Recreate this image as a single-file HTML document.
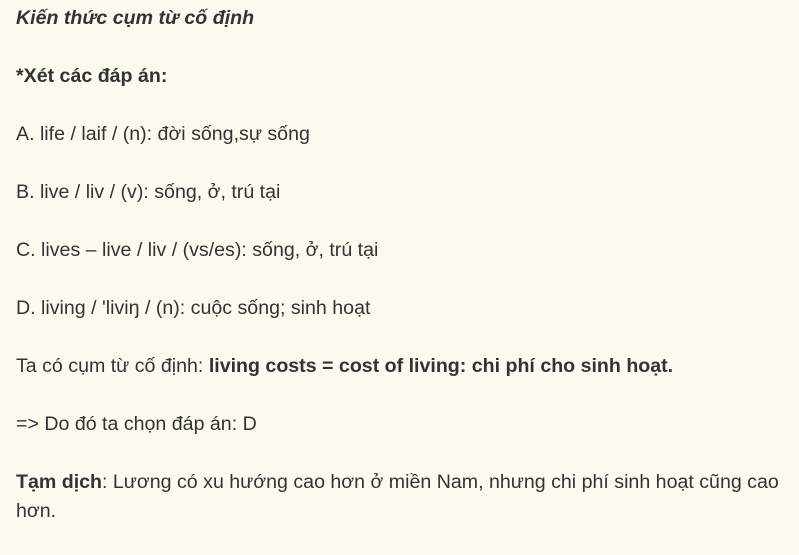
<!DOCTYPE html>
<html><head><meta charset="utf-8"><style>
html,body{margin:0;padding:0;background:#fdf9ef;width:799px;height:529px;overflow:hidden}
body{font-family:"Liberation Sans",Arial,sans-serif;font-size:19.6px;color:#333;}
.w{position:absolute;left:16px;top:4px;width:783px}
p{margin:0 0 29px 0;line-height:29px;white-space:nowrap}
p.last{white-space:normal}
</style></head><body><div class="w">
<p><b><i>Kiến thức cụm từ cố định</i></b></p>
<p><b>*Xét các đáp án:</b></p>
<p>A. life / laif / (n): đời sống,sự sống</p>
<p>B. live / liv / (v): sống, ở, trú tại</p>
<p>C. lives – live / liv / (vs/es): sống, ở, trú tại</p>
<p>D. living / 'liviŋ / (n): cuộc sống; sinh hoạt</p>
<p>Ta có cụm từ cố định: <b>living costs = cost of living: chi phí cho sinh hoạt.</b></p>
<p>=&gt; Do đó ta chọn đáp án: D</p>
<p class="last"><b>Tạm dịch</b>: Lương có xu hướng cao hơn ở miền Nam, nhưng chi phí sinh hoạt cũng cao hơn.</p>
</div></body></html>
